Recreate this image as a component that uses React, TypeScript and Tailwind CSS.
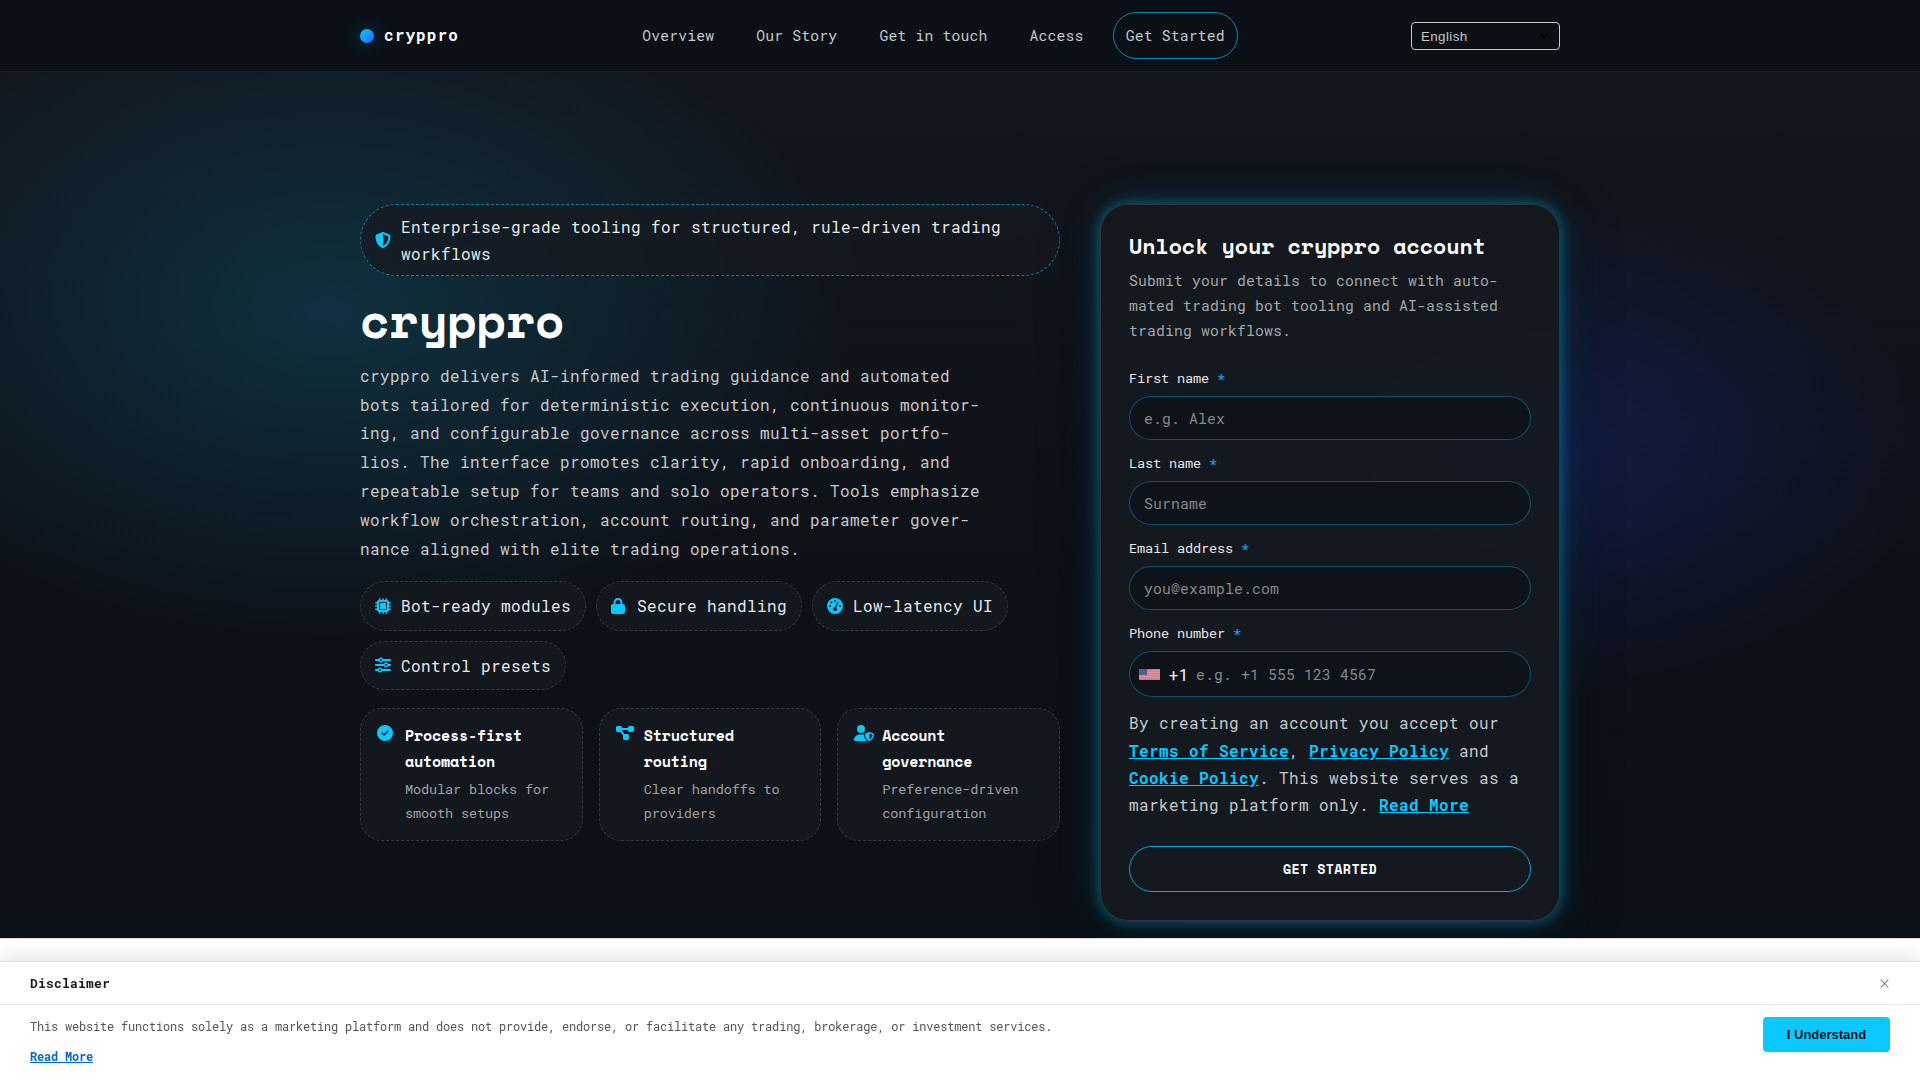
import type { ReactNode } from 'react';
import type { IconType } from 'react-icons';
import {
  FaShieldHalved,
  FaMicrochip,
  FaLock,
  FaGaugeHigh,
  FaSliders,
  FaCircleCheck,
  FaDiagramProject,
  FaUserShield,
} from 'react-icons/fa6';

const navLinks = ['Overview', 'Our Story', 'Get in touch', 'Access'];

const chips: { icon: IconType; width: string; label: string }[] = [
  { icon: FaMicrochip, width: 'w-4', label: 'Bot-ready modules' },
  { icon: FaLock, width: 'w-3.5', label: 'Secure handling' },
  { icon: FaGaugeHigh, width: 'w-4', label: 'Low-latency UI' },
  { icon: FaSliders, width: 'w-4', label: 'Control presets' },
];

const features: { icon: IconType; width: string; title: string; text: string }[] = [
  { icon: FaCircleCheck, width: 'w-4', title: 'Process-first automation', text: 'Modular blocks for smooth setups' },
  { icon: FaDiagramProject, width: 'w-[18px]', title: 'Structured routing', text: 'Clear handoffs to providers' },
  { icon: FaUserShield, width: 'w-5', title: 'Account governance', text: 'Preference-driven configuration' },
];

const fields = [
  { label: 'First name', placeholder: 'e.g. Alex' },
  { label: 'Last name', placeholder: 'Surname' },
  { label: 'Email address', placeholder: 'you@example.com' },
];

function Header() {
  return (
    <header className="h-[72px] border-b border-white/8 bg-[#0b1017]">
      <div className="mx-auto flex h-full w-[1200px] items-center justify-between">
        <a className="flex items-center gap-2.5 font-bold tracking-[1.1px] text-white">
          <span className="size-3.5 rounded-full bg-linear-135 from-[#0bc8ff] to-[#2a63f6] shadow-[0_0_18px_rgba(11,200,255,0.35)]" />
          <span className="-mt-0.5">cryppro</span>
        </a>
        <nav className="-ml-[3px] flex items-center gap-4 text-[14.72px] tracking-[0.18px] text-[#c6c8ca]">
          {navLinks.map((link) => (
            <a key={link} className="border border-transparent px-3 py-2.5">
              {link}
            </a>
          ))}
          <a className="rounded-full border border-[#0bc8ff]/65 px-3 py-2.5">Get Started</a>
        </nav>
        <div className="flex h-7 w-[149px] items-center justify-between rounded border border-[#c6c8ca] pr-2.5 pl-[9px] font-['Liberation_Sans',sans-serif] text-[13.33px] text-[#c6c8ca]">
          <span className="mt-[3px]">English</span>
          <svg width="10" height="6" viewBox="0 0 10 6" fill="none" stroke="#000" strokeWidth="1.6">
            <path d="M1 0.8 5 4.8 9 0.8" />
          </svg>
        </div>
      </div>
    </header>
  );
}

function Intro() {
  return (
    <div className="w-[700px]">
      <div className="flex items-center gap-2.5 rounded-full border border-dashed border-[#0bc8ff]/60 bg-[#161a20]/75 px-3.5 py-2 text-[#e6e7e8]">
        <FaShieldHalved className="size-4 shrink-0 text-[#0bc8ff]" />
        <span>Enterprise-grade tooling for structured, rule-driven trading workflows</span>
      </div>
      <h1 className="mt-[18px] font-['Space_Mono','Roboto_Mono','Liberation_Mono',monospace] text-[48px] leading-[52.8px] font-bold tracking-[-0.2px] text-white">
        cryppro
      </h1>
      <p className="mt-[14.6px] leading-[28.8px] text-[#c6c8ca]">
        cryppro delivers AI-informed trading guidance and automated
        <br />
        bots tailored for deterministic execution, continuous monitor-
        <br />
        ing, and configurable governance across multi-asset portfo-
        <br />
        lios. The interface promotes clarity, rapid onboarding, and
        <br />
        repeatable setup for teams and solo operators. Tools emphasize
        <br />
        workflow orchestration, account routing, and parameter gover-
        <br />
        nance aligned with elite trading operations.
      </p>
      <div className="mt-[17.4px] flex flex-wrap gap-2.5">
        {chips.map(({ icon: Icon, width, label }) => (
          <span
            key={label}
            className="flex items-center gap-2.5 rounded-full border border-dashed border-white/15 bg-[#151a20]/75 px-3.5 py-[10.3px] text-[#e6e7e8]"
          >
            <span className="flex w-4 text-[#0bc8ff]">
              <Icon className={`h-4 ${width}`} />
            </span>
            {label}
          </span>
        ))}
      </div>
      <div className="mt-[18px] grid grid-cols-3 gap-4">
        {features.map(({ icon: Icon, width, title, text }) => (
          <div
            key={title}
            className="flex gap-2.5 rounded-[22px] border border-dashed border-white/15 bg-[#151a20]/75 px-4 pt-[13px] pb-[14.4px]"
          >
            <span className="mt-[3px] flex w-[18px] shrink-0 text-[#0bc8ff]">
              <Icon className={`h-4 shrink-0 ${width}`} />
            </span>
            <div>
              <h3 className="font-['Space_Mono','Roboto_Mono','Liberation_Mono',monospace] text-[15px] leading-[26.1px] font-bold tracking-[-0.18px] text-white">
                {title}
              </h3>
              <p className="mt-[3.6px] text-[13.6px] leading-[23.9px] tracking-[-0.16px] text-[#9fa1a4]">{text}</p>
            </div>
          </div>
        ))}
      </div>
    </div>
  );
}

function Label({ children }: { children: ReactNode }) {
  return (
    <div className="mb-1.5 text-[13.6px] leading-[1.7] tracking-[-0.16px] text-[#e6e7e8]">
      {children} <span className="text-[#0bb4e5]">*</span>
    </div>
  );
}

function UsFlag() {
  return (
    <svg width="21" height="11" viewBox="0 0 21 11">
      <rect width="21" height="11" fill="#d67683" />
      <path d="M0 1.8h21M0 3.6h21M0 5.4h21M0 7.2h21M0 9h21" stroke="#e6bcc2" strokeWidth="0.45" />
      <rect width="8" height="6" fill="#5a5c8c" />
    </svg>
  );
}

function SignUpCard() {
  return (
    <div className="w-[460px] rounded-[28px] border border-white/12 bg-[#151a20]/90 p-7 shadow-[0_0_14px_rgba(11,200,255,0.45),0_0_44px_rgba(11,200,255,0.15),0_12px_60px_rgba(0,0,0,0.4)]">
      <h2 className="font-['Space_Mono','Roboto_Mono','Liberation_Mono',monospace] text-[21.6px] leading-[26px] font-bold tracking-[0px] text-white">
        Unlock your cryppro account
      </h2>
      <p className="mt-[9px] text-[14.72px] leading-[1.7] tracking-[0.166px] text-[#a4a6a9]">
        Submit your details to connect with auto-
        <br />
        mated trading bot tooling and AI-assisted
        <br />
        trading workflows.
      </p>
      <div className="mt-[24px] flex flex-col gap-3">
        {fields.map((field) => (
          <div key={field.label}>
            <Label>{field.label}</Label>
            <input
              placeholder={field.placeholder}
              className="block h-11 w-full rounded-full border border-[#0bc8ff]/35 bg-[#0e131a] px-3.5 text-[14.72px] tracking-[0.166px] placeholder:text-[#85888c]"
            />
          </div>
        ))}
        <div>
          <Label>Phone number</Label>
          <div className="flex h-[46px] items-center rounded-full border border-[#0bc8ff]/35 bg-[#0e131a] px-[9px]">
            <UsFlag />
            <span className="mt-0.5 ml-[9px] w-[18px] font-[Roboto,sans-serif] tracking-[0.8px] text-white">+1</span>
            <input
              placeholder="e.g. +1 555 123 4567"
              className="ml-[9px] flex-1 text-[14.72px] tracking-[0.166px] placeholder:text-[#85888c]"
            />
          </div>
        </div>
      </div>
      <p className="mt-[11.9px] text-[#c6c8ca] [&_a]:font-bold [&_a]:text-[#0bc8ff] [&_a]:underline">
        By creating an account you accept our <a>Terms of Service</a>, <a>Privacy Policy</a> and{' '}
        <a>Cookie Policy</a>. This website serves as a marketing platform only. <a>Read More</a>
      </p>
      <button className="mt-[27.9px] block h-[46px] w-full rounded-full border border-[#0bc8ff]/80 font-['Space_Mono','Roboto_Mono','Liberation_Mono',monospace] text-[13.33px] font-bold tracking-[0.4px] text-white">
        GET STARTED
      </button>
    </div>
  );
}

function Disclaimer() {
  return (
    <div className="fixed inset-x-0 bottom-0 h-[119px] border-t border-[#e0e0e0] bg-white tracking-[-0.2px] shadow-[0_-4px_20px_rgba(0,0,0,0.12)]">
      <div className="flex h-[43px] items-center justify-between border-b border-[#e8e8e8] px-[30px]">
        <strong className="text-[13px] tracking-[0.2px] text-[#1a1a1a]">Disclaimer</strong>
        <svg width="9" height="9" viewBox="0 0 9 9" stroke="#888" strokeWidth="1.2" className="mr-px">
          <path d="M0.7 0.7 8.3 8.3M8.3 0.7 0.7 8.3" />
        </svg>
      </div>
      <div className="flex items-start justify-between px-[30px] pt-[11px]">
        <div className="text-xs text-[#555]">
          <p className="leading-5">
            This website functions solely as a marketing platform and does not provide, endorse, or facilitate any
            trading, brokerage, or investment services.
          </p>
          <a className="mt-2.5 block leading-5 font-bold text-[#0066cc] underline">Read More</a>
        </div>
        <button className="mt-px h-[35px] w-[127px] rounded bg-[#0bc8ff] pt-0.5 font-['Liberation_Sans',sans-serif] text-[13px] font-bold tracking-normal text-[#0a0d12]">
          I Understand
        </button>
      </div>
    </div>
  );
}

export default function App() {
  return (
    <div className="h-[1080px] overflow-hidden bg-white font-['Roboto_Mono','Liberation_Mono',monospace] text-base leading-[1.7] tracking-[0.4px]">
      <Header />
      <main className="h-[867px] overflow-hidden border-b border-[#ddd] bg-[radial-gradient(ellipse_540px_340px_at_330px_240px,rgba(11,200,255,0.16),transparent),radial-gradient(ellipse_400px_250px_at_1540px_377px,rgba(30,70,255,0.19),transparent),linear-gradient(180deg,#12161d,#0d1118_60%,#0c1118)]">
        <div className="mx-auto flex w-[1200px] items-start justify-between pt-[132px]">
          <Intro />
          <SignUpCard />
        </div>
      </main>
      <Disclaimer />
    </div>
  );
}
